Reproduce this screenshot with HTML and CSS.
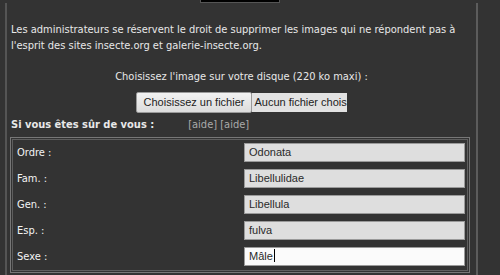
FILE: index.html
```html
<!DOCTYPE html>
<html lang="fr">
<head>
    <meta charset="UTF-8">
    <meta name="viewport" content="width=device-width, initial-scale=1.0">
    <title>Envoyer une image</title>
    <link rel="stylesheet" href="styles.css">
</head>
<body>
    <div class="tab"></div>
    <div class="frame">
        <p class="notice">Les administrateurs se réservent le droit de supprimer les images qui ne répondent pas à<br>l'esprit des sites insecte.org et galerie-insecte.org.</p>
        <p class="choose">Choisissez l'image sur votre disque (220 ko maxi) :</p>
        <div class="file">
            <span class="file-btn">Choisissez un fichier</span><span class="file-name">Aucun fichier choisi</span>
        </div>
        <div class="confirm">
            <b>Si vous êtes sûr de vous :</b>
            <span class="help">[aide] [aide]</span>
        </div>
        <div class="box">
            <table class="fields">
                <tr><td class="label">Ordre :</td><td><span class="field">Odonata</span></td></tr>
                <tr><td class="label">Fam. :</td><td><span class="field">Libellulidae</span></td></tr>
                <tr><td class="label">Gen. :</td><td><span class="field">Libellula</span></td></tr>
                <tr><td class="label">Esp. :</td><td><span class="field">fulva</span></td></tr>
                <tr><td class="label">Sexe :</td><td><span class="field active">Mâle<span class="caret"></span></span></td></tr>
            </table>
        </div>
    </div>
</body>
</html>
```

FILE: styles.css
```css
body {
    margin: 0;
    background-color: #333333;
    color: #e8e8e8;
    font-family: "DejaVu Sans Condensed", "DejaVu Sans", sans-serif;
    font-size: 11px;
    line-height: 16px;
    height: 275px;
    overflow: hidden;
}
.tab {
    width: 78px;
    height: 2px;
    margin-left: 200px;
    background-color: #000;
    border: 1px solid #555;
    border-top: none;
}
.frame {
    margin-left: 5px;
    width: 469px;
    height: 272px;
    border-left: 2px solid #555;
    border-right: 2px solid #5c5c5c;
    overflow: hidden;
}
.notice {
    margin: 19px 0 0 4px;
}
.choose {
    margin: 15px 0 0 0;
    text-align: center;
}
.file {
    margin-top: 7px;
    display: flex;
    justify-content: center;
    font-family: "Liberation Sans", Arial, sans-serif;
    font-size: 11px;
    color: #222;
}
.file-btn {
    height: 19px;
    line-height: 19px;
    padding: 0 7px;
    background: linear-gradient(#f2f2f2, #dcdcdc);
    border: 1px solid #9a9a9a;
    border-radius: 2px;
}
.file-name {
    width: 93px;
    height: 19px;
    line-height: 19px;
    margin-top: 1px;
    padding-left: 2px;
    background-color: #e2e2e2;
    white-space: nowrap;
    overflow: hidden;
}
.confirm {
    margin: 4px 0 0 4px;
    display: flex;
    gap: 34px;
}
.help {
    color: #aaaaaa;
}
.box {
    margin: 4px 6px 0 3px;
    border: 1px solid #777;
    padding: 1px;
}
.fields {
    width: 100%;
    border: 1px solid #5e5e5e;
    border-collapse: collapse;
}
.fields td {
    padding: 3px 2px 4px 0;
}
.fields .label {
    padding-left: 4px;
    color: #f4f4f4;
}
.field {
    display: block;
    width: 215px;
    height: 17px;
    line-height: 17px;
    padding-left: 4px;
    margin-left: auto;
    background-color: #dedede;
    border: 1px solid #9a9a9a;
    color: #2a2a2a;
    font-family: "Liberation Sans", Arial, sans-serif;
    font-size: 11px;
}
.field.active {
    background-color: #fbfbfb;
}
.caret {
    display: inline-block;
    width: 1px;
    height: 13px;
    margin-left: 1px;
    vertical-align: -2px;
    background-color: #000;
}
```
